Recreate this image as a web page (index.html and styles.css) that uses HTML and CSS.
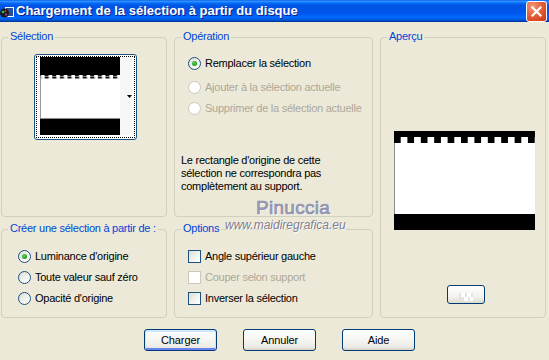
FILE: index.html
```
<!DOCTYPE html>
<html lang="fr">
<head>
<meta charset="utf-8">
<title>Chargement de la sélection à partir du disque</title>
<link rel="stylesheet" href="styles.css">
</head>
<body>
<div class="window">
  <header class="titlebar">
    <svg class="app-icon" width="15" height="15" viewBox="0 0 15 15">
      <rect x="5.5" y="3.5" width="8" height="9" fill="#2E4F9A" stroke="#fff"/>
      <circle cx="4.5" cy="9" r="4.5" fill="#1a1a1a"/>
      <circle cx="3" cy="8" r="1.3" fill="#2FC45A"/>
      <circle cx="6" cy="10.5" r="1.1" fill="#B03AC8"/>
      <circle cx="5.5" cy="7" r="0.9" fill="#E33"/>
    </svg>
    <span class="title">Chargement de la sélection à partir du disque</span>
    <span class="close">
      <svg width="19" height="19" viewBox="0 0 19 19"><path d="M5.5 5.5 L13.5 13.5 M13.5 5.5 L5.5 13.5" stroke="#fff" stroke-width="2.2" stroke-linecap="square"/></svg>
    </span>
  </header>

  <main class="dialog">
    <div class="groups">
      <section class="group g-sel">
        <div class="legend">Sélection</div>
        <div class="thumb">
          <div class="thumb-focus">
            <svg class="thumb-img" width="97" height="80" viewBox="0 0 97 80">
              <defs>
                <pattern id="teethS" x="0" y="0" width="7.6" height="4" patternUnits="userSpaceOnUse">
                  <rect x="0" y="0" width="4" height="3.5" fill="#111"/>
                  <rect x="4" y="0" width="1" height="2" fill="#888"/>
                </pattern>
              </defs>
              <rect x="3" y="0" width="80" height="78" fill="#fff"/>
              <rect x="3" y="0" width="80" height="18" fill="#000"/>
              <rect x="3" y="18" width="80" height="3.5" fill="url(#teethS)"/>
              <rect x="3" y="20" width="1" height="41" fill="#9a9a9a"/>
              <rect x="3" y="61" width="80" height="1" fill="#8a8a8a"/>
              <rect x="3" y="62" width="80" height="16" fill="#000"/>
              <rect x="83" y="0" width="12" height="78" fill="#f7f7f7"/>
              <polygon points="90,38 95,38 92.5,41" fill="#000"/>
            </svg>
          </div>
        </div>
      </section>

      <section class="group g-op">
        <div class="legend">Opération</div>
        <label class="opt r1"><span class="radio checked"></span>Remplacer la sélection</label>
        <label class="opt r2 disabled"><span class="radio"></span>Ajouter à la sélection actuelle</label>
        <label class="opt r3 disabled"><span class="radio"></span>Supprimer de la sélection actuelle</label>
        <p class="note">Le rectangle d'origine de cette<br>sélection ne correspondra pas<br>complètement au support.</p>
      </section>

      <section class="group g-preview">
        <div class="legend">Aperçu</div>
        <svg class="preview" width="141" height="99" viewBox="0 0 141 99">
          <defs>
            <pattern id="teethP" x="0" y="0" width="13.4" height="6" patternUnits="userSpaceOnUse">
              <rect x="0" y="0" width="6.7" height="6" fill="#000"/>
              <rect x="6.7" y="0" width="6.7" height="6" fill="#fff"/>
            </pattern>
          </defs>
          <rect x="0" y="0" width="141" height="99" fill="#fff"/>
          <rect x="0" y="0" width="141" height="6" fill="#000"/>
          <rect x="0" y="6" width="141" height="6" fill="url(#teethP)"/>
          <rect x="0" y="12" width="1" height="71" fill="#8c8c8c"/>
          <rect x="0" y="83" width="141" height="16" fill="#000"/>
        </svg>
        <span class="mini-btn">
          <svg width="14" height="8" viewBox="0 0 14 8">
            <rect x="0" y="0" width="14" height="8" fill="#e4e4e0"/>
            <rect x="2" y="0" width="4" height="4" fill="#fff"/>
            <rect x="8" y="0" width="4" height="4" fill="#fff"/>
            <rect x="5" y="4" width="4" height="4" fill="#fff"/>
            <rect x="11" y="4" width="3" height="4" fill="#fff"/>
          </svg>
        </span>
      </section>

      <section class="group g-create">
        <div class="legend">Créer une sélection à partir de :</div>
        <label class="opt first"><span class="radio checked"></span>Luminance d'origine</label>
        <label class="opt next"><span class="radio"></span>Toute valeur sauf zéro</label>
        <label class="opt next"><span class="radio"></span>Opacité d'origine</label>
      </section>

      <section class="group g-options">
        <div class="legend">Options</div>
        <label class="opt first"><span class="check"></span>Angle supérieur gauche</label>
        <label class="opt next disabled"><span class="check"></span>Couper selon support</label>
        <label class="opt next"><span class="check"></span>Inverser la sélection</label>
      </section>
    </div>

    <div class="buttons">
      <button class="btn default">Charger</button>
      <button class="btn">Annuler</button>
      <button class="btn">Aide</button>
    </div>
  </main>

  <div class="wm-name">Pinuccia</div>
  <div class="wm-url">www.maidiregrafica.eu</div>
</div>
</body>
</html>
```

FILE: styles.css
```
* { box-sizing: border-box; }

body {
  margin: 0;
  width: 549px;
  height: 360px;
  overflow: hidden;
  background: #ECE9D8;
  font-family: "Liberation Sans", Arial, sans-serif;
  font-size: 11px;
  color: #000;
}

.window {
  position: relative;
  width: 549px;
  height: 360px;
}

/* ---------- title bar ---------- */
.titlebar {
  height: 22px;
  display: flex;
  align-items: center;
  color: #fff;
  background: linear-gradient(to bottom,
    #0058EE 0%, #3A93FF 5%, #288EFF 8%, #127DFF 11%, #036FFC 14%,
    #0262EE 18%, #0057E5 24%, #0054E3 30%, #0055EB 56%, #005BF5 66%,
    #026AFE 76%, #0062EF 86%, #0052D6 92%, #0040AB 96%, #003092 100%);
}

.app-icon {
  flex: none;
  margin-top: 1px;
}

.title {
  margin-left: 1px;
  font-family: "Liberation Sans", Arial, sans-serif;
  font-weight: bold;
  font-size: 13px;
  line-height: 16px;
  text-shadow: 1px 1px #0A1E8C;
  white-space: nowrap;
}

.close {
  margin-left: auto;
  margin-right: 2px;
  width: 21px;
  height: 21px;
  border: 1px solid #fff;
  border-radius: 3px;
  background: radial-gradient(circle at 30% 25%, #F39A7E 0%, #E86B47 35%, #D9471F 75%, #C6391A 100%);
  display: flex;
  align-items: center;
  justify-content: center;
}

/* ---------- dialog body ---------- */
.dialog {
  padding: 15px 0 0 1px;
  letter-spacing: -0.25px;
}

.groups {
  display: grid;
  grid-template-columns: 166px 199px 166px;
  grid-template-rows: 180px 89px;
  column-gap: 7px;
  row-gap: 12px;
}

.group {
  border: 1px solid #D0D0BF;
  border-radius: 4px;
  display: flex;
  flex-direction: column;
  align-items: flex-start;
}

.g-preview {
  grid-column: 3;
  grid-row: 1 / span 2;
}

.legend {
  margin: -8px 0 0 6px;
  padding: 0 2px;
  background: #ECE9D8;
  color: #0046D5;
  line-height: 13px;
  white-space: nowrap;
}

/* selection thumbnail */
.thumb {
  margin: 11px 0 0 32px;
  width: 103px;
  height: 86px;
  border: 1px solid #1C5180;
  border-radius: 3px;
  background: #fff;
  padding: 1px;
}

.thumb-focus {
  width: 100%;
  height: 100%;
  border: 1px dotted #000;
}

.thumb-img { display: block; }

/* options / radios / checks */
.opt {
  display: flex;
  align-items: center;
  gap: 4px;
  height: 13px;
  line-height: 13px;
  white-space: nowrap;
}

.opt.disabled { color: #ACA899; }

.g-op .opt { margin-left: 13px; }
.g-op .r1 { margin-top: 14px; }
.g-op .r2 { margin-top: 11px; }
.g-op .r3 { margin-top: 8px; }

.g-create .opt { margin-left: 16px; }
.g-options .opt { margin-left: 13px; }
.opt.first { margin-top: 15px; }
.opt.next { margin-top: 8px; }

.radio {
  flex: none;
  width: 13px;
  height: 13px;
  border: 1px solid #1C5180;
  border-radius: 50%;
  background: linear-gradient(135deg, #DCDCD7 0%, #F4F4F0 60%, #FFFFFF 100%);
  display: flex;
  align-items: center;
  justify-content: center;
}

.radio.checked::after {
  content: "";
  width: 5px;
  height: 5px;
  border-radius: 50%;
  background: radial-gradient(circle at 40% 40%, #5CD65C 0%, #21A121 60%, #1A8A1A 100%);
}

.disabled .radio {
  border-color: #CAC8BB;
  background: #FFFFFF;
}

.check {
  flex: none;
  width: 13px;
  height: 13px;
  border: 1px solid #1C5180;
  background: linear-gradient(135deg, #DCDCD7 0%, #F4F4F0 60%, #FFFFFF 100%);
}

.disabled .check {
  border-color: #CAC8BB;
  background: #FFFFFF;
}

.note {
  margin: 39px 0 0 6px;
  line-height: 13px;
}

/* preview */
.preview {
  display: block;
  margin: 88px 0 0 13px;
}

.mini-btn {
  margin: 55px 0 0 66px;
  width: 38px;
  height: 19px;
  border: 1px solid #003C74;
  border-radius: 3px;
  background: linear-gradient(to bottom, #FFFFFF 0%, #F4F3EE 60%, #DEDBCF 100%);
  display: flex;
  align-items: center;
  justify-content: center;
}

.mini-btn svg { margin-top: 5px; }

/* bottom buttons */
.buttons {
  display: flex;
  gap: 26px;
  margin: 11px 0 0 143px;
}

.btn {
  width: 73px;
  height: 22px;
  padding: 0;
  border: 1px solid #003C74;
  border-radius: 3px;
  background: linear-gradient(to bottom, #FFFFFF 0%, #F7F7F4 40%, #ECEBE6 85%, #D6D0C5 100%);
  font-family: "Liberation Sans", Arial, sans-serif;
  font-size: 11px;
  letter-spacing: -0.1px;
  color: #000;
}

.btn.default {
  box-shadow: inset 0 1px 0 1px #CEE7FF, inset 0 -1px 0 1px #6982EE;
}

/* watermark overlay */
.wm-name {
  position: absolute;
  left: 256px;
  top: 198px;
  font-family: "Liberation Sans", Arial, sans-serif;
  font-size: 19px;
  line-height: 19px;
  color: #A0A0BC;
  -webkit-text-stroke: 0.7px #8A8AA8;
  text-shadow: 1px 1px 0 #FFFFFF;
  letter-spacing: 0.3px;
}

.wm-url {
  position: absolute;
  left: 225px;
  top: 219px;
  font-family: "Liberation Sans", Arial, sans-serif;
  font-size: 12px;
  line-height: 12px;
  font-style: italic;
  color: #7E7E90;
  text-shadow: 1px 1px 0 #FFFFFF;
}
```
